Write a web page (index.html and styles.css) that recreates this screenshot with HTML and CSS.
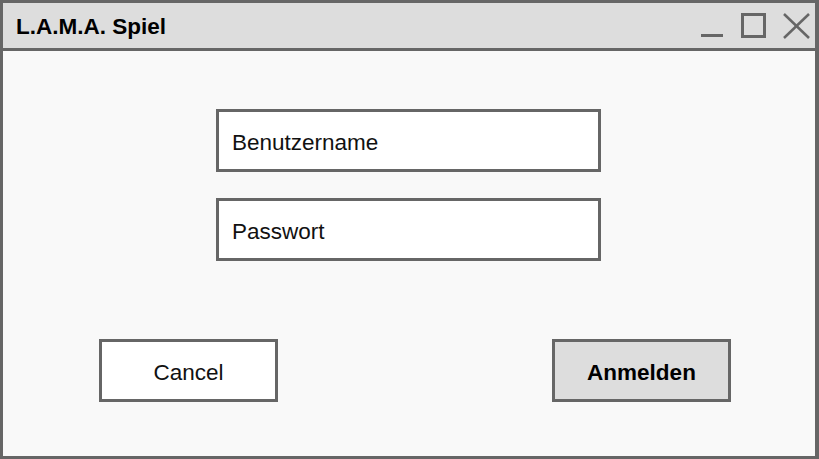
FILE: index.html
```html
<!DOCTYPE html>
<html lang="de">
<head>
<meta charset="utf-8">
<title>L.A.M.A. Spiel</title>
<link rel="stylesheet" href="styles.css">
</head>
<body>
<div class="window">
  <div class="titlebar">
    <span class="title">L.A.M.A. Spiel</span>
    <svg class="controls" width="120" height="45" viewBox="0 0 120 45" aria-hidden="true">
      <line x1="6" y1="32.5" x2="28" y2="32.5" stroke="#666" stroke-width="3"/>
      <rect x="47.5" y="11.5" width="22" height="22" fill="none" stroke="#666" stroke-width="3"/>
      <line x1="89" y1="11" x2="114" y2="35" stroke="#666" stroke-width="2.5"/>
      <line x1="114" y1="11" x2="89" y2="35" stroke="#666" stroke-width="2.5"/>
    </svg>
  </div>
  <div class="content">
    <div class="fields">
      <div class="field">Benutzername</div>
      <div class="field">Passwort</div>
    </div>
    <div class="actions">
      <div class="btn">Cancel</div>
      <div class="btn primary">Anmelden</div>
    </div>
  </div>
</div>
</body>
</html>
```
FILE: styles.css
```css
html, body {
  margin: 0;
  padding: 0;
  background: #f9f9f9;
}

.window {
  box-sizing: border-box;
  width: 819px;
  height: 459px;
  border-style: solid;
  border-color: #666;
  border-width: 3px 4px 3px 3px;
  background: #f9f9f9;
  display: flex;
  flex-direction: column;
  font-family: "Liberation Sans", Arial, sans-serif;
  color: #111;
}

.titlebar {
  box-sizing: border-box;
  height: 48px;
  flex: 0 0 48px;
  background: #dddddd;
  border-bottom: 3px solid #666;
  display: flex;
  align-items: center;
  justify-content: space-between;
  padding-left: 13px;
}

.title {
  font-weight: bold;
  font-size: 22.5px;
  color: #000;
  padding-top: 3px;
}

.controls {
  display: block;
  align-self: flex-start;
}

.content {
  flex: 1;
  display: flex;
  flex-direction: column;
}

.fields {
  display: flex;
  flex-direction: column;
  gap: 26px;
  margin: 58px 0 0 213px;
}

.field {
  box-sizing: border-box;
  width: 385px;
  height: 63px;
  background: #fff;
  border: 3px solid #666;
  display: flex;
  align-items: center;
  padding: 4px 0 0 13px;
  font-size: 22.5px;
}

.actions {
  display: flex;
  justify-content: space-between;
  margin: 78px 84px 0 96px;
}

.btn {
  box-sizing: border-box;
  width: 179px;
  height: 63px;
  background: #fff;
  border: 3px solid #666;
  display: flex;
  align-items: center;
  justify-content: center;
  padding-top: 4px;
  font-size: 22.5px;
}

.btn.primary {
  background: #dddddd;
  font-weight: bold;
  color: #000;
}
```
